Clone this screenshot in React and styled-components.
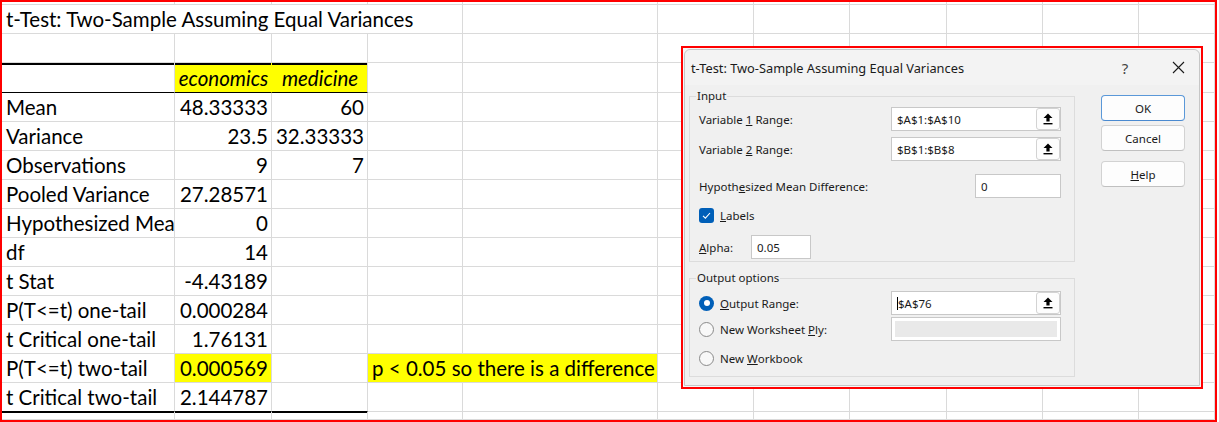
import React from "react";
import styled, { createGlobalStyle } from "styled-components";

const GlobalStyle = createGlobalStyle`
  html, body {
    margin: 0;
    padding: 0;
    background: #fff;
  }
`;

const GRID = "#dadada";
const YELLOW = "#ffff00";
const UI_FONT = `"Noto Sans", "Open Sans", "Liberation Sans", sans-serif`;

// * Spreadsheet
const Frame = styled.div`
  position: relative;
  width: 1217px;
  height: 422px;
  box-sizing: border-box;
  border: 2px solid #ff0000;
  overflow: hidden;
`;

const Sheet = styled.div`
  display: grid;
  grid-template-columns: 173px 97px 96px 95px 195px 96px 96px 97px 96px 96px 76px;
  grid-template-rows: 3px 29px 29px 30px repeat(11, 29px) 8px;
  font-family: Lato, "Liberation Sans", sans-serif;
  font-size: 20.5px;
  color: #000;
`;

const Cell = styled.div`
  grid-column: span ${(p) => p.$span};
  box-sizing: border-box;
  min-width: 0;
  display: flex;
  align-items: flex-end;
  justify-content: ${(p) => p.$align};
  padding: 0 3px 1px 4px;
  border-right: 1px solid ${(p) => (p.$join ? YELLOW : GRID)};
  border-bottom: 1px solid
    ${(p) => (p.$rule === "thin" || p.$rule === "thick" ? "#000" : GRID)};
  box-shadow: ${(p) =>
    p.$rule === "thick" ? "0 1px 0 #000" : p.$cap ? "inset 0 2px 0 #000" : "none"};
  background: ${(p) => (p.$fill ? YELLOW : "transparent")};
  font-style: ${(p) => (p.$italic ? "italic" : "normal")};
  line-height: 1.2;
  white-space: nowrap;
  overflow: hidden;
`;

const COLS = 11;
const TITLE = "t-Test: Two-Sample Assuming Equal Variances";

const stats = [
  ["Mean", "48.33333", "60"],
  ["Variance", "23.5", "32.33333"],
  ["Observations", "9", "7"],
  ["Pooled Variance", "27.28571"],
  ["Hypothesized Mean Difference", "0"],
  ["df", "14"],
  ["t Stat", "-4.43189"],
  ["P(T<=t) one-tail", "0.000284"],
  ["t Critical one-tail", "1.76131"],
  ["P(T<=t) two-tail", "0.000569"],
  ["t Critical two-tail", "2.144787"],
];

function buildRows() {
  const rows = [];
  rows.push([]);
  rows.push([{ text: TITLE, span: 4 }]);
  rows.push([]);
  rows.push([
    { cap: true, rule: "thin" },
    { text: "economics", italic: true, align: "center", fill: true, join: true, cap: true, rule: "thin" },
    { text: "medicine", italic: true, align: "center", fill: true, cap: true, rule: "thin" },
  ]);
  stats.forEach(([label, a, b], i) => {
    const last = i === stats.length - 1;
    const rule = last ? "thick" : undefined;
    const row = [
      { text: label, rule },
      { text: a, align: "flex-end", rule, fill: label === "P(T<=t) two-tail" },
      { text: b, align: "flex-end", rule },
    ];
    if (label === "P(T<=t) two-tail") {
      row.push({ text: "p < 0.05 so there is a difference", span: 2, fill: true });
    }
    rows.push(row);
  });
  rows.push([]);

  // pad every row out to the full column count
  return rows.map((row) => {
    const used = row.reduce((n, c) => n + (c.span || 1), 0);
    return row.concat(Array.from({ length: COLS - used }, () => ({})));
  });
}

function Spreadsheet() {
  const rows = buildRows();
  return (
    <Sheet>
      {rows.map((row, r) =>
        row.map((c, i) => (
          <Cell
            key={`${r}-${i}`}
            $span={c.span || 1}
            $align={c.align || "flex-start"}
            $italic={c.italic}
            $fill={c.fill}
            $join={c.join}
            $rule={c.rule}
            $cap={c.cap}
          >
            {c.text}
          </Cell>
        ))
      )}
    </Sheet>
  );
}

// * Dialog
const DialogFrame = styled.div`
  position: absolute;
  left: 679px;
  top: 44px;
  width: 522px;
  height: 343px;
  box-sizing: border-box;
  border: 2px solid #ff0000;
  padding: 1px;
  background: #f7f7f7;
`;

const Dialog = styled.div`
  height: 100%;
  box-sizing: border-box;
  display: flex;
  flex-direction: column;
  background: #f0f0f0;
  border: 1px solid #c6c6c6;
  border-radius: 6px 6px 0 0;
  font-family: ${UI_FONT};
  font-size: 11.5px;
  color: #1a1a1a;
`;

const TitleBar = styled.div`
  height: 35px;
  flex: none;
  display: flex;
  align-items: center;
  padding: 0 3px 0 6px;
  background: #f3f3f3;
  border-radius: 6px 6px 0 0;
`;

const Title = styled.div`
  flex: 1;
  font-size: 12.8px;
`;

const TitleControl = styled.div`
  width: 36px;
  height: 30px;
  display: flex;
  align-items: center;
  justify-content: center;
  font-size: 15px;
  color: #444;
  & + & {
    margin-left: 17px;
  }
`;

const Body = styled.div`
  display: flex;
  align-items: flex-start;
  padding: 3px 0 0 4px;
`;

const LeftColumn = styled.div`
  width: 386px;
  display: flex;
  flex-direction: column;
`;

const Group = styled.fieldset`
  margin: ${(p) => (p.$first ? "0" : "8px 0 0")};
  padding: ${(p) => (p.$first ? "3px 13px 2px 9px" : "5px 13px 6px 9px")};
  border: 1px solid #dcdcdc;
  min-width: 0;
`;

const Legend = styled.legend`
  margin-left: -3px;
  padding: 0 1px;
  line-height: 16px;
  font-size: 11.5px;
`;

const Row = styled.div`
  display: flex;
  align-items: center;
  justify-content: ${(p) => (p.$spread ? "space-between" : "flex-start")};
  height: ${(p) => p.$h || 24}px;
  margin-top: ${(p) => p.$gap || 0}px;
`;

const Label = styled.div`
  width: ${(p) => (p.$w ? `${p.$w}px` : "auto")};
  flex: none;
  display: flex;
  align-items: center;
  white-space: nowrap;
`;

const Key = styled.span`
  text-decoration: underline;
  text-underline-offset: 1px;
`;

const Field = styled.div`
  width: ${(p) => p.$w}px;
  height: 24px;
  box-sizing: border-box;
  flex: none;
  display: flex;
  align-items: center;
  background: #fff;
  border: 1px solid #c8c8c8;
  padding-left: 5px;
`;

const FieldText = styled.div`
  flex: 1;
  white-space: nowrap;
`;

const Caret = styled.span`
  display: inline-block;
  width: 0;
  height: 13px;
  border-left: 1px solid #000;
  vertical-align: -2px;
`;

const DisabledField = styled.div`
  width: 170px;
  height: 24px;
  box-sizing: border-box;
  border: 1px solid #c8c8c8;
  background: #fff;
  padding: 3px;
`;

const DisabledFill = styled.div`
  height: 100%;
  background: #e9e9e9;
`;

const BrowseButton = styled.div`
  width: 24px;
  height: 22px;
  box-sizing: border-box;
  flex: none;
  display: flex;
  align-items: center;
  justify-content: center;
  background: #fdfdfd;
  border: 1px solid #d3d3d3;
  border-radius: 3px;
`;

const CheckBox = styled.div`
  width: 15px;
  height: 15px;
  flex: none;
  border-radius: 3px;
  background: #005fb8;
  display: flex;
  align-items: center;
  justify-content: center;
  margin-right: 6px;
`;

const Radio = styled.div`
  width: 15px;
  height: 15px;
  flex: none;
  box-sizing: border-box;
  border-radius: 50%;
  margin-right: 6px;
  display: flex;
  align-items: center;
  justify-content: center;
  background: ${(p) => (p.$on ? "#005fb8" : "#f8f8f8")};
  border: ${(p) => (p.$on ? "none" : "1px solid #8a8a8a")};

  &::after {
    content: "";
    display: ${(p) => (p.$on ? "block" : "none")};
    width: 6px;
    height: 6px;
    border-radius: 50%;
    background: #fff;
  }
`;

const ButtonColumn = styled.div`
  width: 84px;
  margin: 7px 0 0 26px;
  display: flex;
  flex-direction: column;
`;

const Button = styled.div`
  height: 26px;
  box-sizing: border-box;
  display: flex;
  align-items: center;
  justify-content: center;
  background: #fdfdfd;
  border: 1px solid ${(p) => (p.$primary ? "#5a98d8" : "#d2d2d2")};
  border-bottom-color: ${(p) => (p.$primary ? "#4a8ad0" : "#c0c0c0")};
  border-radius: 4px;
  margin-top: ${(p) => p.$gap || 0}px;
`;

function UploadArrow() {
  return (
    <svg width="10" height="12" viewBox="0 0 10 12">
      <polygon points="5,0.5 9.5,5 6.6,5 6.6,8.5 3.4,8.5 3.4,5 0.5,5" fill="#000" />
      <rect x="0.5" y="10" width="9" height="1.4" fill="#000" />
    </svg>
  );
}

function CloseGlyph() {
  return (
    <svg width="13" height="13" viewBox="0 0 13 13">
      <path d="M1 1 L12 12 M12 1 L1 12" stroke="#1a1a1a" strokeWidth="1.1" />
    </svg>
  );
}

function RangeField({ value, caret }) {
  return (
    <Field $w={170}>
      <FieldText>
        {caret && <Caret />}
        {value}
      </FieldText>
      <BrowseButton>
        <UploadArrow />
      </BrowseButton>
    </Field>
  );
}

function AnalysisDialog() {
  return (
    <DialogFrame>
      <Dialog>
        <TitleBar>
          <Title>{TITLE}</Title>
          <TitleControl>?</TitleControl>
          <TitleControl>
            <CloseGlyph />
          </TitleControl>
        </TitleBar>

        <Body>
          <LeftColumn>
            <Group $first>
              <Legend>Input</Legend>
              <Row>
                <Label $w={192}>
                  Variable&nbsp;<Key>1</Key>&nbsp;Range:
                </Label>
                <RangeField value="$A$1:$A$10" />
              </Row>
              <Row $gap={6}>
                <Label $w={192}>
                  Variable&nbsp;<Key>2</Key>&nbsp;Range:
                </Label>
                <RangeField value="$B$1:$B$8" />
              </Row>
              <Row $gap={13} $spread>
                <Label>
                  Hypoth<Key>e</Key>sized Mean Difference:
                </Label>
                <Field $w={86}>
                  <FieldText>0</FieldText>
                </Field>
              </Row>
              <Row $gap={10} $h={15}>
                <CheckBox>
                  <svg width="11" height="11" viewBox="0 0 11 11">
                    <polyline
                      points="2,5.8 4.4,8.2 9,3"
                      fill="none"
                      stroke="#fff"
                      strokeWidth="1.1"
                    />
                  </svg>
                </CheckBox>
                <Label>
                  <Key>L</Key>abels
                </Label>
              </Row>
              <Row $gap={12}>
                <Label $w={52}>
                  <Key>A</Key>lpha:
                </Label>
                <Field $w={60}>
                  <FieldText>0.05</FieldText>
                </Field>
              </Row>
            </Group>

            <Group>
              <Legend>Output options</Legend>
              <Row>
                <Label $w={192}>
                  <Radio $on />
                  <Key>O</Key>utput Range:
                </Label>
                <RangeField value="$A$76" caret />
              </Row>
              <Row $gap={2}>
                <Label $w={192}>
                  <Radio />
                  New Worksheet&nbsp;<Key>P</Key>ly:
                </Label>
                <DisabledField>
                  <DisabledFill />
                </DisabledField>
              </Row>
              <Row $gap={5}>
                <Label>
                  <Radio />
                  New&nbsp;<Key>W</Key>orkbook
                </Label>
              </Row>
            </Group>
          </LeftColumn>

          <ButtonColumn>
            <Button $primary>OK</Button>
            <Button $gap={4}>Cancel</Button>
            <Button $gap={10}>
              <Key>H</Key>elp
            </Button>
          </ButtonColumn>
        </Body>
      </Dialog>
    </DialogFrame>
  );
}

export default function App() {
  return (
    <>
      <GlobalStyle />
      <Frame>
        <Spreadsheet />
        <AnalysisDialog />
      </Frame>
    </>
  );
}
